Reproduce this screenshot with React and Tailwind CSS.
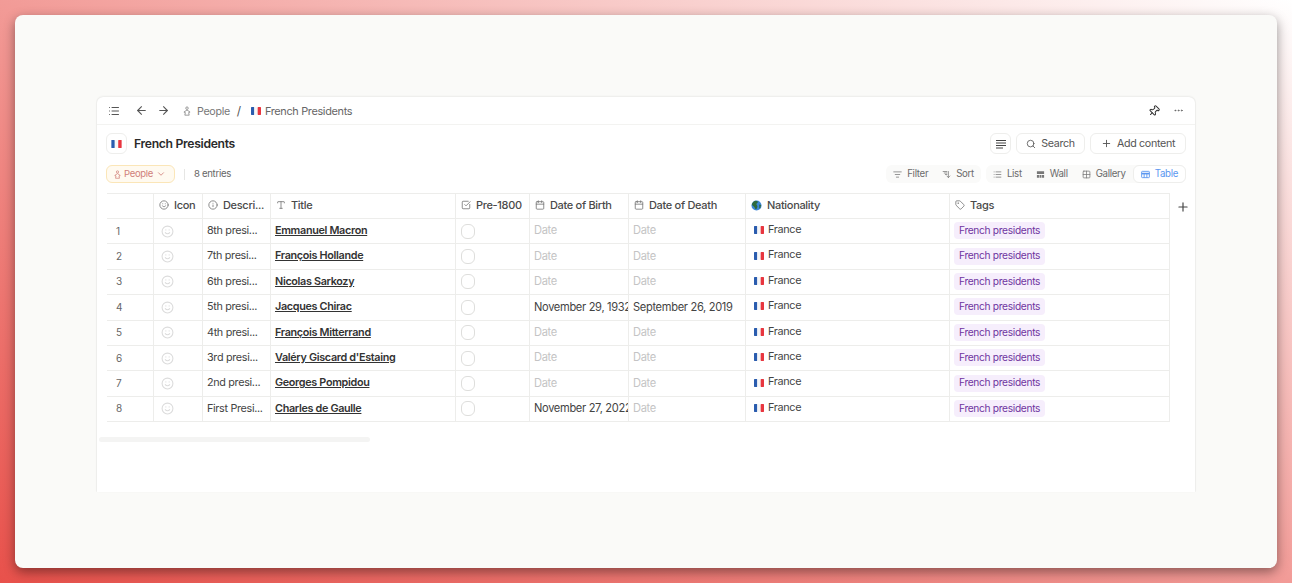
import React from "react";
import { ArrowDownWideNarrow, ArrowLeft, ArrowRight, Calendar, CheckSquare, ChevronDown, Ellipsis, Grid2x2, Info, List, ListFilter, Pin, Plus, Search, Smile, Tag, Type } from "lucide-react";

const rows = [
  { n: 1, desc: "8th presi...", title: "Emmanuel Macron" },
  { n: 2, desc: "7th presi...", title: "François Hollande" },
  { n: 3, desc: "6th presi...", title: "Nicolas Sarkozy" },
  { n: 4, desc: "5th presi...", title: "Jacques Chirac", birth: "November 29, 1932", death: "September 26, 2019" },
  { n: 5, desc: "4th presi...", title: "François Mitterrand" },
  { n: 6, desc: "3rd presi...", title: "Valéry Giscard d'Estaing" },
  { n: 7, desc: "2nd presi...", title: "Georges Pompidou" },
  { n: 8, desc: "First Presi...", title: "Charles de Gaulle", birth: "November 27, 2022" },
];

const gridCols = "grid grid-cols-[46px_49px_68px_185px_74px_99px_117px_204px_221px]";
const cellBorder = "border-l border-[#ededeb]";

function Flag({ className = "w-[10px] h-[8px]" }) {
  return (
    <svg viewBox="0 0 9 7" className={`${className} shrink-0`}>
      <rect width="3" height="7" rx="0.5" fill="#2a5cae" />
      <rect x="3" width="3" height="7" fill="#f6f6f6" />
      <rect x="6" width="3" height="7" rx="0.5" fill="#e8363f" />
    </svg>
  );
}

function Globe() {
  return (
    <svg viewBox="0 0 12 12" className="w-[11px] h-[11px] shrink-0">
      <circle cx="6" cy="6" r="5.500" fill="#3d86d6" />
      <path d="M3 1.500c1.500-1 3-1 4.500 0 .5 1-1 1.500-1.500 2.500S7.500 6 7 7.500 5.500 10.500 5 10 4 7.500 3 7 1 5 1 4.500 2 2.500 3 1.500z" fill="#2f6b3c" />
      <path d="M9 5l2 .5L10 9 9 9z" fill="#2f6b3c" />
    </svg>
  );
}

function PersonIcon({ className }) {
  return (
    <svg viewBox="0 0 12 12" fill="none" stroke="currentColor" strokeWidth="1" strokeLinejoin="round" className={className}>
      <circle cx="6" cy="2.600" r="1.500" />
      <path d="M6 4.800 9.700 7.300 8 7.900 8.600 11H3.400L4 7.900 2.300 7.300Z" />
    </svg>
  );
}

function TextLinesIcon() {
  return (
    <svg viewBox="0 0 12 12" stroke="currentColor" strokeWidth="1" className="w-[12px] h-[12px] text-[#444]">
      <path d="M1 2.500H11M1 5H11M1 7.500H11M1 10H8" />
    </svg>
  );
}

function WallIcon() {
  return (
    <svg viewBox="0 0 10 10" className="w-[9px] h-[9px] text-[#777]" fill="currentColor">
      <path d="M1 1.500h8v3H1zM1 5.500h2.300v3H1zM3.900 5.500h2.200v3H3.900zM6.700 5.500H9v3H6.700z" />
    </svg>
  );
}

function TableIcon() {
  return (
    <svg viewBox="0 0 10 10" className="w-[9px] h-[9px]" fill="none" stroke="currentColor" strokeWidth="1">
      <rect x="0.700" y="1.500" width="8.600" height="7" rx="0.800" />
      <path d="M0.700 4H9.300" strokeWidth="1.800" />
      <path d="M3.500 4.500V8.500M6.500 4.500V8.500" />
    </svg>
  );
}

function HeaderCell({ icon, children }) {
  return (
    <div className={`flex items-center gap-[5px] pl-[5px] pb-[2px] text-[11px] font-medium text-[#4a4a4a] overflow-hidden whitespace-nowrap ${cellBorder}`}>
      {icon}
      <span>{children}</span>
    </div>
  );
}

function Tool({ icon, label, className = "text-[#6b6b6b]" }) {
  return (
    <div className={`flex items-center gap-[5px] h-[18px] px-[7px] text-[9.7px] ${className}`}>
      {icon}
      {label}
    </div>
  );
}

export default function App() {
  const hIcon = "w-[10px] h-[10px] text-[#777] shrink-0";
  const tIcon = "w-[9px] h-[9px] text-[#777] shrink-0";
  return (
    <div className="h-[583px] p-[15px] overflow-hidden bg-[linear-gradient(to_top_right,#e8514b_0%,#f29b97_50%,#ffffff_100%)] font-['Inter',sans-serif] tracking-[-0.02em]">
      <div className="h-[553px] px-[82px] pt-[82px] rounded-lg bg-[#fafaf8] shadow-[0_4px_12px_rgba(0,0,0,0.42)]">
        <div className="h-[395px] bg-white rounded-t-md shadow-[0_-1px_2px_rgba(0,0,0,0.05),-1px_0_1px_rgba(0,0,0,0.04),1px_0_1px_rgba(0,0,0,0.04)]">
          {/* top bar */}
          <div className="flex items-center h-[28px] pl-[11px] pr-[11px] border-b border-[#f3f3f1]">
            <List className="w-[12px] h-[12px] text-[#555]" />
            <ArrowLeft className="w-[13px] h-[13px] text-[#555] ml-[15px]" />
            <ArrowRight className="w-[13px] h-[13px] text-[#555] ml-[9px]" />
            <PersonIcon className="w-[10px] h-[10px] text-[#888] ml-[12px]" />
            <span className="ml-[5px] mt-[3px] text-[10.7px] text-[#777]">People</span>
            <span className="ml-[7px] text-[12px] text-[#555]">/</span>
            <Flag className="w-[10px] h-[8px] ml-[10px]" />
            <span className="ml-[4px] mt-[2px] text-[10.9px] text-[#666]">French Presidents</span>
            <Pin className="w-[12px] h-[12px] text-[#333] ml-auto rotate-45" />
            <Ellipsis className="w-[11px] h-[11px] text-[#666] ml-[13px]" />
          </div>

          {/* title row */}
          <div className="flex items-start h-[40px] pt-[8px] pl-[9px] pr-[9px]">
            <div className="flex items-center justify-center w-[21px] h-[21px] rounded-md border border-[#eeeeec]">
              <Flag className="w-[11px] h-[8px]" />
            </div>
            <h1 className="ml-[7px] leading-[21px] text-[12.2px] font-semibold text-[#2a2a2a]">French Presidents</h1>
            <div className="flex items-center justify-center w-[21px] h-[21px] ml-auto rounded-md border border-[#eeeeec]">
              <TextLinesIcon />
            </div>
            <div className="flex items-center gap-[5px] h-[21px] w-[69px] justify-center ml-[5px] rounded-md border border-[#eeeeec] text-[10.7px] text-[#555]">
              <Search className="w-[10px] h-[10px]" />
              <span className="mt-px">Search</span>
            </div>
            <div className="flex items-center gap-[5px] h-[21px] w-[96px] justify-center ml-[5px] rounded-md border border-[#eeeeec] text-[10.7px] text-[#555]">
              <Plus className="w-[11px] h-[11px]" />
              <span className="mt-px">Add content</span>
            </div>
          </div>

          {/* filter row */}
          <div className="flex items-center h-[18px] pl-[9px] pr-[9px]">
            <div className="flex items-center gap-[2px] w-[69px] h-[18px] pl-[6px] rounded-md border border-[#fbe6b8] bg-[#fffaf0] text-[9.5px] text-[#d0807a]">
              <PersonIcon className="w-[9px] h-[9px]" />
              People
              <ChevronDown className="w-[10px] h-[10px] ml-[1px]" />
            </div>
            <div className="w-px h-[11px] ml-[9px] bg-[#e6e6e4]" />
            <span className="ml-[9px] text-[9.6px] text-[#666]">8 entries</span>
            <div className="flex items-center ml-auto rounded-md bg-[#fafaf9]">
              <Tool icon={<ListFilter className={tIcon} />} label="Filter" />
              <Tool icon={<ArrowDownWideNarrow className={`${tIcon} -scale-x-100`} />} label="Sort" />
            </div>
            <div className="flex items-center ml-[5px] rounded-md bg-[#fafaf9]">
              <Tool icon={<List className={tIcon} />} label="List" />
              <Tool icon={<WallIcon />} label="Wall" />
              <Tool icon={<Grid2x2 className={tIcon} />} label="Gallery" />
              <Tool icon={<TableIcon />} label="Table" className="text-[#5b97f0] bg-white border border-[#eeeeec] rounded-md" />
            </div>
          </div>

          {/* table */}
          <div className="flex mt-[10px] ml-[10px]">
            <div className="w-[1063px] border-y border-r border-[#ededeb]">
              <div className={`${gridCols} h-[24px]`}>
                <div />
                <HeaderCell icon={<Smile className={hIcon} />}>Icon</HeaderCell>
                <HeaderCell icon={<Info className={hIcon} />}>Descri...</HeaderCell>
                <HeaderCell icon={<Type className={hIcon} />}>Title</HeaderCell>
                <HeaderCell icon={<CheckSquare className={hIcon} />}>Pre-1800</HeaderCell>
                <HeaderCell icon={<Calendar className={hIcon} />}>Date of Birth</HeaderCell>
                <HeaderCell icon={<Calendar className={hIcon} />}>Date of Death</HeaderCell>
                <HeaderCell icon={<Globe />}>Nationality</HeaderCell>
                <HeaderCell icon={<Tag className={hIcon} />}>Tags</HeaderCell>
              </div>
              {rows.map((row) => (
                <div key={row.n} className={`${gridCols} h-[25.4px] border-t border-[#ededeb] text-[10.8px] text-[#444]`}>
                  <div className="pl-[9px] flex items-center text-[10px] text-[#666]">{row.n}</div>
                  <div className={`flex items-center ${cellBorder} pl-[7px]`}>
                    <Smile className="w-[13px] h-[13px] text-[#dcdcdc]" />
                  </div>
                  <div className={`flex items-center ${cellBorder} pl-[4px] whitespace-nowrap overflow-hidden`}>{row.desc}</div>
                  <div className={`flex items-center ${cellBorder} pl-[4px] font-semibold text-[#333] underline whitespace-nowrap overflow-hidden`}>{row.title}</div>
                  <div className={`flex items-center ${cellBorder} pl-[5px]`}>
                    <div className="w-[14px] h-[15px] rounded-[6px] border border-[#dededc]" />
                  </div>
                  <div className={`flex items-center ${cellBorder} pl-[4px] pb-px text-[11.1px] whitespace-nowrap overflow-hidden ${row.birth ? "text-[#444]" : "text-[#c4c4c4]"}`}>{row.birth || "Date"}</div>
                  <div className={`flex items-center ${cellBorder} pl-[4px] pb-px text-[11.1px] whitespace-nowrap overflow-hidden ${row.death ? "text-[#444]" : "text-[#c4c4c4]"}`}>{row.death || "Date"}</div>
                  <div className={`flex items-center gap-[4px] ${cellBorder} pl-[8px] pb-[2px]`}>
                    <Flag />
                    France
                  </div>
                  <div className={`flex items-center ${cellBorder} pl-[4px] pb-px`}>
                    <span className="px-[5px] h-[17px] flex items-center rounded bg-[#f6eefc] text-[10.2px] text-[#6f34a0]">French presidents</span>
                  </div>
                </div>
              ))}
            </div>
            <Plus className="w-[14px] h-[14px] text-[#444] ml-[6px] mt-[7px]" />
          </div>

          {/* scrollbar */}
          <div className="w-[271px] h-[5px] ml-[2px] mt-[15px] rounded-sm bg-[#f4f4f3]" />
        </div>
      </div>
    </div>
  );
}
